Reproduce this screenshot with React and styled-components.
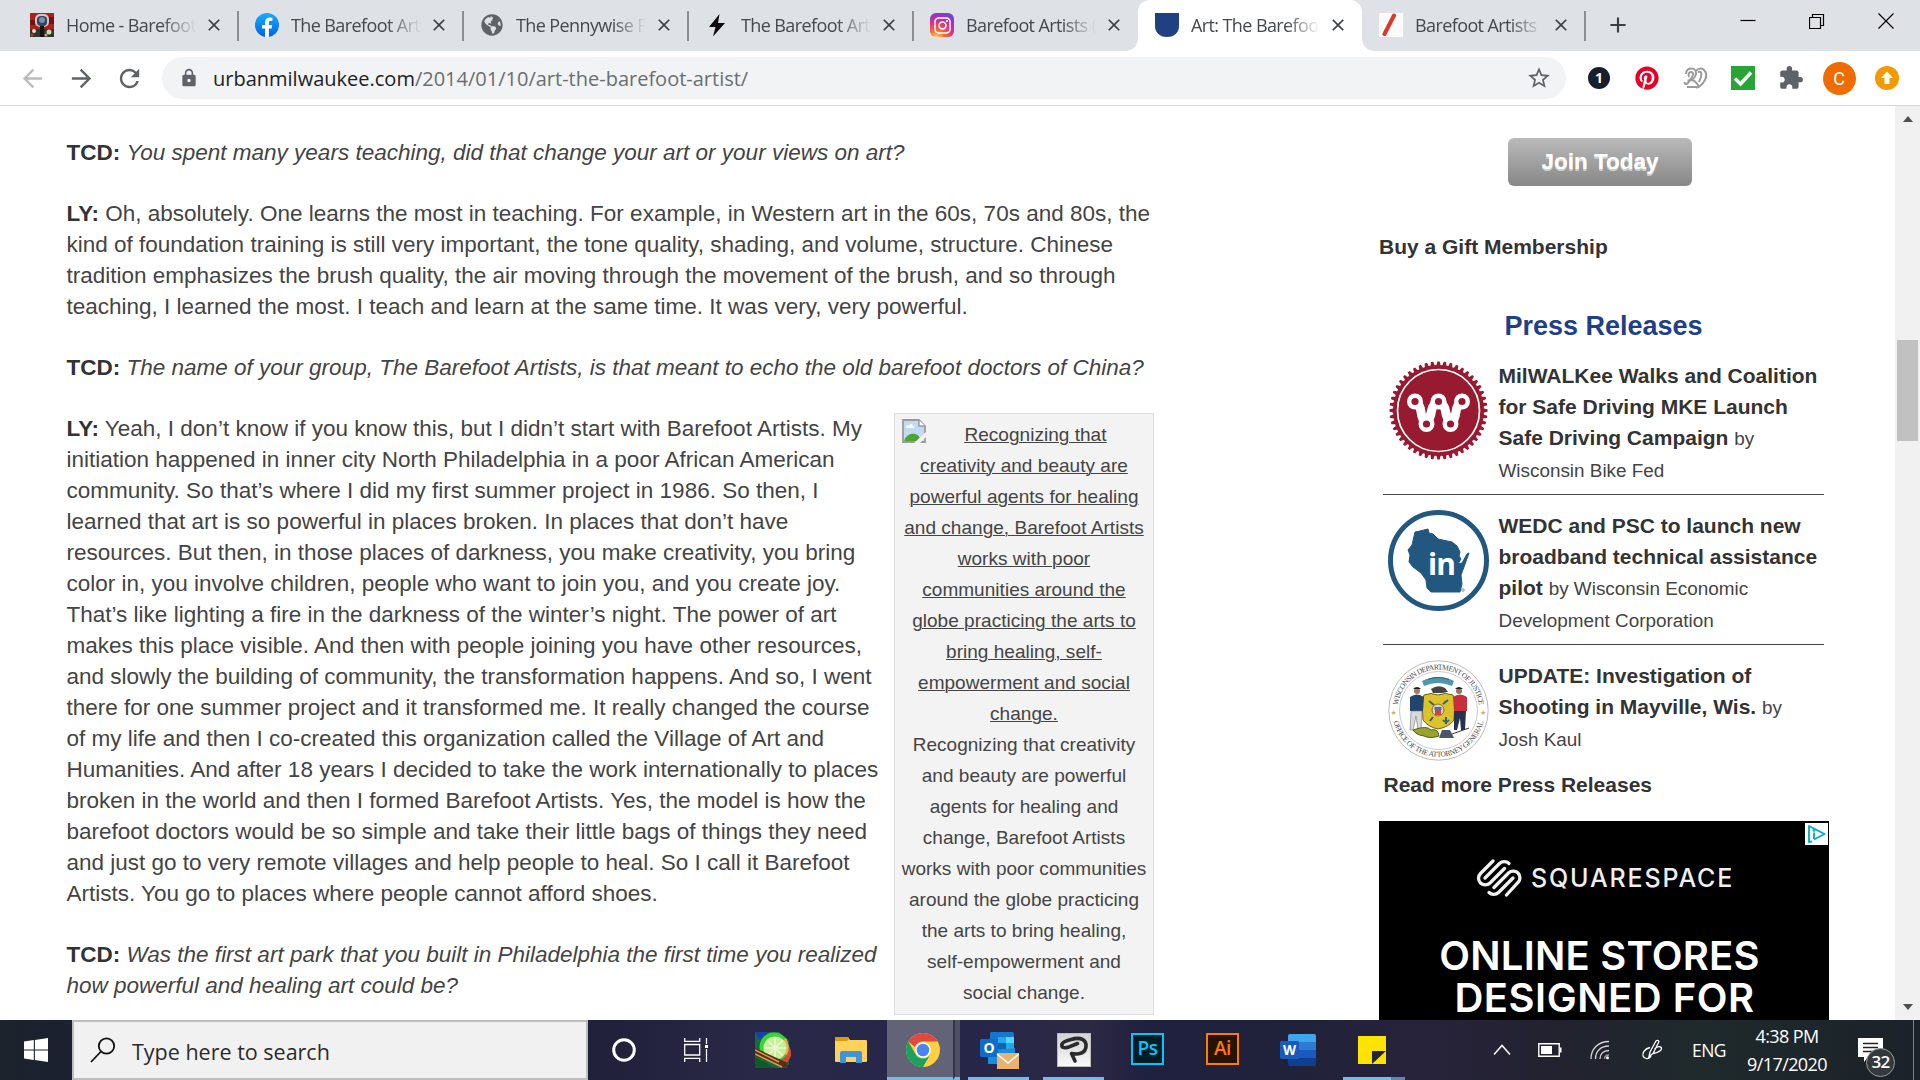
import React from "react";
import styled, { createGlobalStyle } from "styled-components";
import { MdArrowBack, MdArrowForward, MdRefresh, MdLock, MdStarBorder, MdExtension, MdClose, MdAdd } from "react-icons/md";
import { FaGlobeAmericas, FaInstagram, FaPinterest } from "react-icons/fa";

const Global = createGlobalStyle`
  * { box-sizing: border-box; }
  body { margin: 0; background: #fff; overflow: hidden; }
  svg { display: block; flex: none; }
`;

const UI = `"Open Sans", "Noto Sans", sans-serif`;
const PAGE = `"Liberation Sans", Arial, sans-serif`;

const Screen = styled.div`
  width: 1920px; height: 1080px; display: flex; flex-direction: column;
  overflow: hidden; background: #fff; font-family: ${PAGE};
`;

/* ---------- tab strip ---------- */
const TabStrip = styled.div`
  height: 51px; flex: none; display: flex; align-items: stretch;
  background: #dee1e6; padding-left: 13px;
`;
const Tab = styled.div`
  width: ${(p) => p.$w || 225}px; display: flex; align-items: center; flex: none;
  padding: 0 14px 1px 17px; position: relative;
  background: ${(p) => (p.$active ? "#fff" : "transparent")};
  border-radius: 12px 12px 0 0;
  ${(p) => p.$active && `
    &::before, &::after { content: ""; position: absolute; bottom: 0; width: 12px; height: 12px; }
    &::before { left: -12px; background: radial-gradient(circle at 0 0, transparent 11.5px, #fff 12px); }
    &::after { right: -12px; background: radial-gradient(circle at 100% 0, transparent 11.5px, #fff 12px); }
  `}
`;
const TabTitle = styled.span`
  flex: 1; min-width: 0; margin: 0 6px 0 12px; overflow: hidden; white-space: nowrap;
  font: 18px/24px ${UI}; letter-spacing: -0.6px; color: #45484c;
  mask-image: linear-gradient(to right, #000 calc(100% - 36px), transparent calc(100% - 2px));
`;
const TabClose = styled.span`
  width: 20px; display: flex; justify-content: center; color: #3c4043;
`;
const TabRule = styled.span`
  width: 2px; height: 30px; background: #8b8f94; margin: 11px -1px 0; flex: none;
`;
const NewTab = styled.span`
  width: 64px; padding: 0 0 1px 2px; display: flex; align-items: center; justify-content: center; color: #3c4043;
`;
const WindowButtons = styled.div`
  margin-left: auto; display: flex; height: 42px;
`;
const WindowButton = styled.span`
  width: 69px; display: flex; align-items: center; justify-content: center;
`;

/* ---------- toolbar ---------- */
const Toolbar = styled.div`
  height: 55px; flex: none; display: flex; align-items: center; background: #fff;
  border-bottom: 1px solid #d5d7da; padding: 0 0 0 18px;
`;
const NavButtons = styled.div`
  display: flex; gap: 19.5px; color: #5f6368; width: 144px; flex: none;
`;
const AddressBar = styled.div`
  width: 1404px; height: 42px; border-radius: 21px; background: #f1f3f4; flex: none;
  display: flex; align-items: center; padding: 0 14px 0 17px; color: #5f6368;
`;
const Url = styled.span`
  flex: 1; margin-left: 14px; padding-top: 1px; white-space: nowrap; font: 20px/28px ${UI}; letter-spacing: 0; color: #6a6e73;
  b { font-weight: 400; color: #202124; }
`;
const Extensions = styled.div`
  flex: none; display: flex; align-items: center; padding-left: 9px;
`;
const Slot = styled.span`
  width: 48px; flex: none; display: flex; justify-content: center; align-items: center; color: ${(p) => p.$c || "#5f6368"};
`;
const Avatar = styled.span`
  width: 33px; height: 33px; border-radius: 50%; background: #ef6c00; color: #fff; text-align: center;
  font: 18px/33px Roboto, sans-serif; flex: none;
`;
const DarkDot = styled.span`
  width: 22px; height: 22px; border-radius: 50%; background: #1a1d2b; color: #fff; text-align: center;
  font: 700 14px/22px ${UI};
`;

/* ---------- page ---------- */
const Page = styled.div`
  height: 914px; flex: none; display: flex; overflow: hidden; background: #fff;
`;
const Article = styled.main`
  width: 1154px; padding: 31px 0 0 66.5px; color: #444;
  font-size: 22.5px; line-height: 31px;
`;
const Para = styled.p`
  margin: 0 0 30px; white-space: nowrap;
  b { color: #333; }
`;
const Caption = styled.figure`
  float: right; width: 260px; height: 602px; margin: 0; padding: 5px 6px 0; text-align: center;
  background: #f3f3f3; border: 1px solid #ddd; font-size: 19px; white-space: nowrap; letter-spacing: 0.03px;
`;
const CaptionLink = styled.div`
  text-decoration: underline;
  text-decoration-thickness: 1px;
`;
const FirstLine = styled.div`
  display: flex;
  svg { margin-left: 1px; }
  span { flex: 1; margin-left: -2px; text-decoration: underline; text-decoration-thickness: 1px; }
`;

const Sidebar = styled.aside`
  width: 450px; margin-left: 225px; padding-top: 32px; display: flex; flex-direction: column; flex: none;
`;
const JoinButton = styled.button`
  align-self: center; margin-right: 8px; width: 184px; height: 48px; border: 0; padding: 0 0 1px; flex: none;
  border-radius: 6px; background: linear-gradient(#bababa, #878787); color: #fff;
  font: 700 22.5px ${PAGE}; text-shadow: 0 1.5px 0 rgba(255,255,255,.55);
`;
const Gift = styled.div`
  margin-top: 45px; font-weight: 700; font-size: 21px; line-height: 31px; color: #333;
`;
const PressTitle = styled.h2`
  margin: 46px 0 17px -1px; text-align: center; font-size: 27px; line-height: 36px; color: #1f3f87;
`;
const Release = styled.div`
  margin: 0 5px 0 4px; height: ${(p) => (p.$last ? 110 : 134)}px; flex: none;
  margin-bottom: ${(p) => (p.$last ? 0 : 16)}px;
  border-bottom: ${(p) => (p.$last ? "0" : "1px solid #444")};
  display: flex; gap: 9.5px; padding-left: 5px;
  font-size: 21px; line-height: 31px; color: #444; white-space: nowrap;
  b { color: #333; }
  & > svg { margin-top: -1px; }
`;
const ReleaseText = styled.div` margin-top: -1px; `;
const By = styled.span` font-size: 18.9px; line-height: 1; `;
const Author = styled.div` margin-top: 2px; font-size: 18.9px; `;
const ReadMore = styled.div`
  margin: -2px 0 21px 4.5px; font-size: 21px; line-height: 31px; font-weight: 700; color: #333;
`;
const Ad = styled.div`
  height: 240px; flex: none; background: #000; color: #fff; position: relative; text-align: center;
  font-family: Inter, sans-serif; padding-top: 37px;
`;
const AdBadge = styled.span`
  position: absolute; top: 2px; right: 1px; width: 23px; height: 22px; background: #fff;
`;
const AdLogo = styled.div`
  display: flex; align-items: center; height: 40px; padding-left: 97px; gap: 9px;
  font-size: 25px; font-weight: 500; letter-spacing: 1.85px; color: #eee;
`;
const AdHead = styled.div`
  margin: 37px 0 0 -9px; font-size: 40px; line-height: 42px; font-weight: 600; letter-spacing: 0.2px; color: #fff;
  div + div { padding-left: 10px; letter-spacing: 0.5px; }
`;

const Scrollbar = styled.div`
  width: 25px; margin-left: auto; background: #f1f1f1; display: flex; flex-direction: column; align-items: center;
  padding: 10px 0;
`;
const Thumb = styled.div`
  width: 21px; height: 101px; margin: 218px 0 auto; background: #c1c1c1;
`;
const Arrow = styled.span`
  width: 0; height: 0; border: 5.5px solid transparent; flex: none;
  ${(p) => (p.$up ? "border-top: 0; border-bottom: 6px solid #505050;" : "border-bottom: 0; border-top: 6px solid #505050;")}
`;

/* ---------- taskbar ---------- */
const Taskbar = styled.div`
  height: 60px; flex: none; display: flex; color: #fff;
  background: linear-gradient(90deg, #1b232c 0, #1c2030 72px, #21203a 590px, #292847 760px, #26264a 960px, #2c2944 1085px, #1f2140 1150px, #20213a 1280px, #27233a 1430px, #22222f 1560px, #1f2a2c 1700px, #1b2229 1920px);
`;
const Start = styled.div`
  width: 72px; display: flex; align-items: center; justify-content: center;
`;
const SearchBox = styled.div`
  width: 516px; border: 2px solid #bebebe; background: #f1f1f1; display: flex; align-items: center;
  padding: 0 0 1px 16px; gap: 16px; color: #2b2b2b; font: 21.5px/28px ${UI};
  span { letter-spacing: 0; padding-top: 5px; }
`;
const AppButton = styled.div`
  width: ${(p) => p.$w || 75}px; display: flex; align-items: center; justify-content: center; flex: none;
  background: ${(p) => (p.$active ? "#636378" : "transparent")};
  padding-left: ${(p) => p.$shift || 0}px;
  position: relative;
  ${(p) => p.$bar && `&::after { content: ""; position: absolute; bottom: 0; height: 3px; left: ${p.$bar[0]}px; width: ${p.$bar[1]}px; background: #76b9ed; }`}
`;
const StackEdge = styled.div`
  width: 7px; background: #505065; border-left: 2px solid #35354a; border-bottom: 3px solid #76b9ed; flex: none;
`;
const DimBar = styled.div`
  width: 14px; height: 3px; align-self: flex-end; background: #568bb5; flex: none;
`;
const Tile = styled.span`
  width: 33px; height: 32px; border: 2px solid ${(p) => p.$c}; background: ${(p) => p.$bg}; color: ${(p) => p.$c};
  font: 600 19px/27px "Open Sans", sans-serif; text-align: center; letter-spacing: -0.5px; margin: 0 1px 3px 0;
`;
const Tray = styled.div`
  margin-left: auto; display: flex; align-items: center; height: 60px; padding-right: 6px;
`;
const TrayItem = styled.span`
  width: ${(p) => p.$w}px; display: flex; justify-content: center; flex: none;
  font: 17.5px/24px ${UI}; letter-spacing: -0.6px;
`;
const Clock = styled.div`
  width: 100px; text-align: center; font: 18px/28px ${UI}; letter-spacing: -0.6px;
`;
const Notice = styled.div`
  width: 56px; margin-left: 20px; position: relative; height: 60px; padding: 18px 0 0 1px;
`;
const Badge = styled.span`
  position: absolute; left: 9px; top: 28px; width: 29px; height: 29px; border-radius: 50%;
  border: 1.5px solid #9a9da0; background: #35393c; color: #fff; text-align: center;
  font: 600 17px/25px ${UI}; letter-spacing: -0.8px;
`;
const DeskEdge = styled.span` width: 1px; height: 60px; background: #7b8084; `;

/* ---------- drawings ---------- */
const HomeFav = () => (
  <svg width="24" height="24" viewBox="0 0 24 24">
    <rect width="24" height="24" fill="#a8231d" /><path d="M0 7h5v5H0zM18 4h6v7h-6z" fill="#6e1512" />
    <rect y="16" width="24" height="8" fill="#2e3a26" />
    <rect x="5" y="1" width="14" height="13" rx="5" fill="#d9c3c6" /><rect x="7" y="3" width="10" height="10" rx="4" fill="#30445f" />
    <circle cx="12" cy="7" r="3" fill="#7195ab" /><path d="M10 13h4v11h-4z" fill="#121510" />
    <circle cx="4" cy="18" r="2" fill="#e2ddd0" /><circle cx="19" cy="19" r="2.5" fill="#d8cdb9" /><circle cx="2" cy="22" r="1.5" fill="#c33" /><circle cx="16" cy="22" r="1.5" fill="#c99" />
  </svg>
);
const Facebook = () => (
  <svg width="24" height="24" viewBox="0 0 24 24">
    <defs><linearGradient id="fb" x2="0" y2="1"><stop stopColor="#18acfe" /><stop offset="1" stopColor="#0163e0" /></linearGradient></defs>
    <circle cx="12" cy="12" r="12" fill="url(#fb)" />
    <path d="M16.6 15.4l.6-3.4h-3.3V9.6c0-1 .5-1.900 2-1.900h1.500V4.800s-1.400-.3-2.700-.3c-2.800 0-4.600 1.700-4.600 4.700V12H7v3.400h3.100V24h3.800v-8.600z" fill="#fff" />
  </svg>
);
const Bolt = () => (
  <svg width="24" height="24" viewBox="0 0 24 24"><path d="M14.500 1L4 14h6.500L8 23.500 20 10h-7z" fill="#0b0b0b" /></svg>
);
const InstaBox = styled.span`
  width: 24px; height: 24px; border-radius: 6px; display: flex; align-items: center; justify-content: center; color: #fff; flex: none;
  background: radial-gradient(circle at 28% 105%, #fed576 0, #f47133 26%, #e2307a 52%, #a033b8 72%, #5b4fe0 100%);
`;
const GlobeFav = styled(FaGlobeAmericas)` margin: 1px; color: #5f6368; `;
const Shield = () => (
  <svg width="24" height="24" viewBox="0 0 24 24"><path d="M0 0h24v13c0 6-4 11-12 11S0 19 0 13z" fill="#1f4083" /></svg>
);
const RedStroke = () => (
  <svg width="24" height="24" viewBox="0 0 24 24"><rect width="24" height="24" fill="#fdfbf9" /><path d="M15 2.500L5.500 21" stroke="#d8392b" strokeWidth="4" strokeLinecap="round" /></svg>
);
const Knot = () => (
  <svg width="25" height="25" viewBox="0 0 25 25" fill="none" stroke="#9b9b9b" strokeWidth="2">
    <path d="M3 8c0-4 3-6 6-5.500 3.500.5 5 3.500 3.500 7-1 3-5 5.500-8 5" /><path d="M6 11c-1-3 0-5 2-5s3 2 1 5l-4 6c-2 2-4 1-3-1" />
    <path d="M8 14c3 0 5 2 7 5 1 2 0 3-2 2L4 21" /><path d="M13 5c2-3 6-3 8-1 4 4 2 9-1 13l-4 4" /><path d="M15 6c3-1 4 1 3 5l-2 5" />
  </svg>
);
const Check = () => (
  <svg width="24" height="24" viewBox="0 0 24 24"><rect width="24" height="24" fill="#28a536" /><path d="M4 12.500l5.500 5.500L20 6.500" fill="none" stroke="#fff" strokeWidth="3.500" /></svg>
);
const UpDot = () => (
  <svg width="24" height="24" viewBox="0 0 24 24"><circle cx="12" cy="12" r="12" fill="#f39a00" /><path d="M12 5.500l6 6.500h-3.500v6h-5v-6H6z" fill="#fff" /></svg>
);
const BrokenImage = () => (
  <svg width="24" height="24" viewBox="0 0 24 24">
    <path d="M1 1h16l6 6v16H1z" fill="#c4d9f3" stroke="#9b9b9b" strokeWidth="1.800" /><path d="M17 1v6h6" fill="#fff" stroke="#9b9b9b" strokeWidth="1.400" />
    <path d="M4 8.500c0-2 2-2.500 3-2 1-2 4-1.500 4 .5 2 0 2 2 .5 2H5z" fill="#fff" /><path d="M2 22c2-6 7-8 11-7 3 .8 5 3 6 7z" fill="#4ba52f" /><path d="M12 24l12-11v5l-6 6z" fill="#f3f3f3" />
  </svg>
);
const teeth = Array.from({ length: 48 }, (_, i) => i * 7.5);
const GearW = () => (
  <svg width="101" height="101" viewBox="0 0 101 101">
    {teeth.map((a) => <path key={a} d="M48.300 6l1-4.500h2.400l1 4.500z" fill="#981a31" transform={`rotate(${a} 50.500 50.500)`} />)}
    <circle cx="50.500" cy="50.500" r="45.500" fill="#981a31" /><circle cx="50.500" cy="50.500" r="41" fill="none" stroke="#fff" strokeWidth="1.700" />
    <g stroke="#fff" strokeWidth="9" fill="none" strokeLinecap="round" strokeLinejoin="round">
      <path d="M27 42q5 2 6 10t5 11M50.500 42q-6 2-7 9t-5 12M50.500 42q6 2 7 9t5 12M74 42q-5 2-6 10t-5 11" />
    </g>
    {[[27, 41.500], [50.500, 41.500], [74, 41.500], [38.500, 64], [62.500, 64]].map(([x, y]) => (
      <g key={x}><circle cx={x} cy={y} r="8" fill="#fff" /><circle cx={x} cy={y} r="3.600" fill="#981a31" /></g>
    ))}
  </svg>
);
const WiscIn = () => (
  <svg width="101" height="101" viewBox="0 0 101 101">
    <circle cx="50.500" cy="50.500" r="48" fill="#fff" stroke="#22587f" strokeWidth="5" />
    <path d="M27 22l5-1 8-2 1 4 4 1 5 5 14 3 5 4 3 6-1 4 2 3-3 5 4-1 5-9 2-1-5 14-3 8 1 9-2 8H43l-4-4-1-8-5-7-8-6-4-5 1-7-2-5 4-5z" fill="#22587f" stroke="#22587f" />
    <text x="40" y="65" fontFamily="Open Sans, sans-serif" fontWeight="700" fontSize="30" letterSpacing="-1" fill="#fff">in</text>
    <circle cx="75" cy="80" r="1.300" fill="none" stroke="#22587f" strokeWidth=".6" />
  </svg>
);
const Seal = () => (
  <svg width="101" height="101" viewBox="0 0 101 101">
    <circle cx="50.500" cy="50.500" r="49.700" fill="#fff" stroke="#bbb" strokeWidth="1" />
    <circle cx="50.500" cy="50.500" r="39" fill="#fff" stroke="#bdbdbd" strokeWidth=".8" />
    <defs><path id="arcTop" d="M9.500 50.500a41 41 0 0 1 82 0" /><path id="arcBot" d="M4.200 50.500a46.300 46.300 0 0 0 92.600 0" /></defs>
    <g fontFamily="Liberation Serif, serif" fontSize="7.600" fill="#4a4a4a" textAnchor="middle">
      <text><textPath href="#arcTop" startOffset="50%" textLength="118">WISCONSIN DEPARTMENT OF JUSTICE</textPath></text>
      <text><textPath href="#arcBot" startOffset="50%" textLength="123">OFFICE OF THE ATTORNEY GENERAL</textPath></text>
    </g>
    <text x="2.500" y="55" fontSize="7" fill="#c9b45a" fontFamily="DejaVu Sans">★</text><text x="92" y="55" fontSize="7" fill="#c9b45a" fontFamily="DejaVu Sans">★</text>
    <path d="M34 21q16-8 32 0l-2 5q-14-6-28 0z" fill="#4f97ad" /><path d="M40 19.500q10-4 21 0" stroke="#2b6277" fill="none" />
    <path d="M43 29q7-5 14-1l3 4-6 1H45z" fill="#444" />
    <path d="M36 35q7-3 14 0 7-3 15 0l2 6-1 19q-5 7-16 9-10-2-15-9l-1-19z" fill="#dcc32a" stroke="#6d6316" />
    <circle cx="50" cy="50" r="6" fill="#d8d3d6" stroke="#857522" /><path d="M47 50h6v5h-6z" fill="#c44" /><path d="M46.500 47h7v3h-7z" fill="#456fa5" />
    <path d="M41 41l5 4M55 44l5-4M42 61l3-4M58 57v7M55 60q3 4 6 0" stroke="#385e83" strokeWidth="2" fill="none" />
    <circle cx="29" cy="31" r="3" fill="#a57a5f" /><path d="M25 29q4-4 8 0z" fill="#222" /><path d="M22 37q7-5 14 0l-1 14H22z" fill="#21456c" /><path d="M23 51h11l-1 19h-3l-2-14-3 14h-3z" fill="#d7dad8" stroke="#777" strokeWidth=".6" />
    <circle cx="71" cy="31" r="3" fill="#9c7257" /><path d="M67 29q4-4 8 0z" fill="#222" /><path d="M65 37q7-5 14 0v14H66z" fill="#c6303a" /><path d="M66 51h12l-1 19h-4l-1-12-3 12h-3z" fill="#27324d" />
    <path d="M25 70q14-5 18 0 7-2 8 6-9 3-15 0-8-1-11-6z" fill="#99a32e" stroke="#4f601b" /><path d="M54 70h8l4 8H51z" fill="#4e5567" /><path d="M64 74l17-6" stroke="#333" />
  </svg>
);
const SquareMark = () => (
  <svg width="46" height="38" viewBox="0 0 46 38" fill="none" stroke="#f1f1f1" strokeWidth="3.300" strokeLinecap="round">
    <path d="M17 2L4.500 14.500a6.700 6.700 0 0 0 9.500 9.500L28.500 9.500" />
    <path d="M9 19L23.500 4.500a6.700 6.700 0 0 1 9.500 0" />
    <path d="M37 19L22.500 33.500a6.700 6.700 0 0 1-9.500 0" />
    <path d="M30.500 36L42 23.500a6.700 6.700 0 0 0-9.500-9.500L18 28.500" />
  </svg>
);
const Windows = () => (
  <svg width="24" height="24" viewBox="0 0 24 24" fill="#fff"><path d="M0 3.400l9.800-1.300v9.300H0zM10.900 1.900L24 0v11.400H10.900zM0 12.500h9.800v9.400L0 20.600zM10.900 12.500H24V24l-13.100-1.900z" /></svg>
);
const Search = () => (
  <svg width="26" height="26" viewBox="0 0 26 26" fill="none" stroke="#111" strokeWidth="1.800"><circle cx="16.500" cy="9" r="7.700" /><path d="M11 14.500L1 25" /></svg>
);
const TaskView = () => (
  <svg width="24" height="24" viewBox="0 0 24 24" fill="none" stroke="#fff" strokeWidth="1.300">
    <path d="M.7 0v3.300h15V0M.7 6.500h15v10.500H.7zM.7 24v-3.700h15V24M22.500 0v6M22.500 11v13" /><path d="M21 7h3v3h-3z" fill="#fff" stroke="none" />
  </svg>
);
const Lime = () => (
  <svg width="37" height="36" viewBox="0 0 37 36">
    <path d="M0 0h24l10 8v24l-3 4H0z" fill="#156b3a" /><path d="M0 0h14L4 8z" fill="#173fae" /><path d="M24 6q13 5 12 18l-5 9-9-7z" fill="#cf4b37" />
    <circle cx="19" cy="15" r="14.500" fill="#38d43c" /><path d="M20 16L31 6q5 9 1 17z" fill="#f0a64c" /><circle cx="20" cy="16" r="11.500" fill="#c9ee9a" />
    {[0, 45, 90, 135].map((a) => <path key={a} d="M20 5v22" stroke="#edfbd4" strokeWidth="1.500" transform={`rotate(${a} 20 16)`} />)}
    <path d="M0 16l33 15-2 5L0 24z" fill="#5a2d14" /><path d="M0 18l24 12M0 22l27 13" stroke="#d99a55" strokeWidth="1.500" /><path d="M0 25l20 11H0z" fill="#0e5a2a" />
  </svg>
);
const Folder = () => (
  <svg width="32" height="26" viewBox="0 0 32 26"><path d="M0 1q0-1 1-1h12l2 3h16q1 0 1 1v20q0 1-1 1H1q-1 0-1-1z" fill="#fdd25a" /><path d="M0 1q0-1 1-1h12l1 2-2 2H0z" fill="#dc9a08" /><path d="M5 26V16q0-2 2-2h18q2 0 2 2v10h-6v-6H11v6z" fill="#3f94dc" /></svg>
);
const Chrome = () => (
  <svg width="34" height="34" viewBox="0 0 34 34">
    <circle cx="17" cy="17" r="17" fill="#fdd040" />
    <path d="M2.300 8.500A17 17 0 0 1 31.700 8.500H17a8.500 8.500 0 0 0-8 5.500z" fill="#e04a3f" />
    <path d="M2.300 8.500A17 17 0 0 0 17 34l7.400-12.700a8.500 8.500 0 0 1-14.800 0z" fill="#1aa15f" />
    <circle cx="17" cy="17" r="7.800" fill="#fff" /><circle cx="17" cy="17" r="6.300" fill="#4a86f0" />
  </svg>
);
const Outlook = () => (
  <svg width="39" height="37" viewBox="0 0 39 37">
    <rect x="10" width="24" height="26" rx="1.500" fill="#1378cf" /><path d="M18 5h8v6h-8z" fill="#28a8ea" /><path d="M26 5h8v6h-8z" fill="#50d9ff" /><path d="M18 11h8v6h-8z" fill="#0f64b8" /><path d="M26 11h8v6h-8z" fill="#28a8ea" />
    <path d="M8 19l27-3v16H8z" fill="#1b8edb" /><rect y="7" width="18" height="18" rx="1.500" fill="#0f6cc7" />
    <text x="9" y="21" textAnchor="middle" fontFamily="Open Sans" fontWeight="700" fontSize="14" fill="#fff">O</text>
    <path d="M17 21h22v16H17z" fill="#eab26f" /><path d="M17 22l11 9 11-9" fill="none" stroke="#fff" strokeWidth="1.600" />
  </svg>
);
const ClipStudio = () => (
  <svg width="34" height="34" viewBox="0 0 34 34">
    <defs><linearGradient id="csp" x2="0" y2="1"><stop stopColor="#d2d2d2" /><stop offset="1" stopColor="#fafafa" /></linearGradient></defs>
    <rect x=".5" y=".5" width="33" height="33" fill="url(#csp)" stroke="#bbb" />
    <path d="M20.500 10.500L11 14.300Q4.500 16 4.800 11.500Q5.500 8.500 14 6.500C24 3.500 29.500 7 29 13.500C28.500 20 22 22 14.500 20.500L18 28" fill="none" stroke="#2b2b2b" strokeWidth="3.600" strokeLinecap="round" strokeLinejoin="round" />
  </svg>
);
const Word = () => (
  <svg width="36" height="32" viewBox="0 0 36 32"><rect x="8" width="28" height="32" rx="2" fill="#103f91" /><path d="M10 0h24q2 0 2 2v6H8V2q0-2 2-2z" fill="#41a5ee" /><path d="M8 8h28v8H8z" fill="#2b7cd3" /><path d="M8 16h28v8H8z" fill="#185abd" />
    <rect y="7" width="19" height="18" rx="1.500" fill="#185abd" /><text x="9.500" y="21" textAnchor="middle" fontFamily="Open Sans" fontWeight="700" fontSize="13.500" fill="#fff">W</text></svg>
);
const Sticky = () => (
  <svg width="28" height="28" viewBox="0 0 28 28"><path d="M0 0h28v28H0z" fill="#fde300" /><path d="M14 28V15h14z" fill="#26233a" /><path d="M18 28l10-13v13z" fill="#fde300" /></svg>
);
const Battery = () => (
  <svg width="24" height="14" viewBox="0 0 24 14"><path d="M.8.8h20.400v12.400H.8z" fill="none" stroke="#fff" strokeWidth="1.400" /><path d="M3 3h11v8H3zM22 4.500h1.500v5H22z" fill="#fff" /></svg>
);
const Wifi = () => (
  <svg width="20" height="20" viewBox="0 0 20 20" fill="none" stroke="#d5d7d8" strokeWidth="1.300"><path d="M1 19C1 9 8 1.500 19 1.500M5.500 19C5.500 11 11 6 19 6M10 19c0-5 3-8.500 9-8.500" /><path d="M14.500 19c0-2 1.500-4 4.500-4" stroke="#999" /><circle cx="17.500" cy="17.800" r="1.500" fill="#fff" stroke="none" /></svg>
);
const Pen = () => (
  <svg width="22" height="22" viewBox="0 0 22 22" fill="none" stroke="#fff" strokeWidth="1.300"><path d="M9 13l6-11q2-1.500 3 .5l-6 12-4 3zM9 8.500C4 9.500 1 14 2 17s6 4 8 0M13.500 10c3-3 7-3 7-.5s-4 4-8 5" /></svg>
);

const tabs = [
  { icon: <HomeFav />, title: "Home - Barefoot Artists" },
  { icon: <Facebook />, title: "The Barefoot Artist" },
  { icon: <GlobeFav size={22} />, title: "The Pennywise Foundation" },
  { icon: <Bolt />, title: "The Barefoot Artist" },
  { icon: <InstaBox><FaInstagram size={19} /></InstaBox>, title: "Barefoot Artists (@bare" },
  { icon: <Shield />, title: "Art: The Barefoot Artist", active: true, w: 224 },
  { icon: <RedStroke />, title: "Barefoot Artists", w: 223 },
];

const answer = [
  "initiation happened in inner city North Philadelphia in a poor African American",
  "community. So that’s where I did my first summer project in 1986. So then, I",
  "learned that art is so powerful in places broken. In places that don’t have",
  "resources. But then, in those places of darkness, you make creativity, you bring",
  "color in, you involve children, people who want to join you, and you create joy.",
  "That’s like lighting a fire in the darkness of the winter’s night. The power of art",
  "makes this place visible. And then with people joining you have other resources,",
  "and slowly the building of community, the transformation happens. And so, I went",
  "there for one summer project and it transformed me. It really changed the course",
  "of my life and then I co-created this organization called the Village of Art and",
  "Humanities. And after 18 years I decided to take the work internationally to places",
  "broken in the world and then I formed Barefoot Artists. Yes, the model is how the",
  "barefoot doctors would be so simple and take their little bags of things they need",
  "and just go to very remote villages and help people to heal. So I call it Barefoot",
  "Artists. You go to places where people cannot afford shoes.",
];
const linkLines = ["creativity and beauty are", "powerful agents for healing", "and change, Barefoot Artists", "works with poor", "communities around the", "globe practicing the arts to", "bring healing, self-", "empowerment and social", "change."];
const captionLines = ["Recognizing that creativity", "and beauty are powerful", "agents for healing and", "change, Barefoot Artists", "works with poor communities", "around the globe practicing", "the arts to bring healing,", "self-empowerment and", "social change."];

export default function App() {
  return (
    <Screen>
      <Global />
      <TabStrip>
        {tabs.map((t, i) => (
          <React.Fragment key={i}>
            <Tab $active={t.active} $w={t.w}>
              {t.icon}<TabTitle>{t.title}</TabTitle><TabClose><MdClose size={20} /></TabClose>
            </Tab>
            {i !== 4 && i !== 5 && <TabRule />}
          </React.Fragment>
        ))}
        <NewTab><MdAdd size={26} /></NewTab>
        <WindowButtons>
          <WindowButton><svg width="16" height="18" viewBox="0 0 16 18"><path d="M.5 8.500h15" stroke="#000" strokeWidth="1.200" /></svg></WindowButton>
          <WindowButton><svg width="16" height="18" viewBox="0 0 16 18" fill="none" stroke="#000" strokeWidth="1.200"><path d="M.5 5.500h11v11H.5zM3.500 5.500V2.500h11v11h-3" /></svg></WindowButton>
          <WindowButton><svg width="16" height="18" viewBox="0 0 16 18"><path d="M.5 1.500l15 15M15.500 1.500l-15 15" stroke="#000" strokeWidth="1.200" /></svg></WindowButton>
        </WindowButtons>
      </TabStrip>

      <Toolbar>
        <NavButtons>
          <MdArrowBack size={29} color="#babcbe" /><MdArrowForward size={29} /><MdRefresh size={29} />
        </NavButtons>
        <AddressBar>
          <MdLock size={20} />
          <Url><b>urbanmilwaukee.com</b>/2014/01/10/art-the-barefoot-artist/</Url>
          <MdStarBorder size={26} />
        </AddressBar>
        <Extensions>
          <Slot><DarkDot>1</DarkDot></Slot>
          <Slot $c="#e60023"><FaPinterest size={24} /></Slot>
          <Slot><Knot /></Slot>
          <Slot><Check /></Slot>
          <Slot><MdExtension size={26} /></Slot>
          <Slot><Avatar>C</Avatar></Slot>
          <Slot><UpDot /></Slot>
        </Extensions>
      </Toolbar>

      <Page>
        <Article>
          <Para><b>TCD:</b> <i>You spent many years teaching, did that change your art or your views on art?</i></Para>
          <Para>
            <b>LY:</b> Oh, absolutely. One learns the most in teaching. For example, in Western art in the 60s, 70s and 80s, the<br />
            kind of foundation training is still very important, the tone quality, shading, and volume, structure. Chinese<br />
            tradition emphasizes the brush quality, the air moving through the movement of the brush, and so through<br />
            teaching, I learned the most. I teach and learn at the same time. It was very, very powerful.
          </Para>
          <Para><b>TCD:</b> <i>The name of your group, The Barefoot Artists, is that meant to echo the old barefoot doctors of China?</i></Para>
          <Caption>
            <CaptionLink>
              <FirstLine><BrokenImage /><span>Recognizing that</span></FirstLine>
              {linkLines.map((l) => <div key={l}>{l}</div>)}
            </CaptionLink>
            {captionLines.map((l) => <div key={l}>{l}</div>)}
          </Caption>
          <Para>
            <b>LY:</b> Yeah, I don’t know if you know this, but I didn’t start with Barefoot Artists. My
            {answer.map((l) => <React.Fragment key={l}><br />{l}</React.Fragment>)}
          </Para>
          <Para><b>TCD:</b> <i>Was the first art park that you built in Philadelphia the first time you realized<br />how powerful and healing art could be?</i></Para>
        </Article>

        <Sidebar>
          <JoinButton>Join Today</JoinButton>
          <Gift>Buy a Gift Membership</Gift>
          <PressTitle>Press Releases</PressTitle>
          <Release>
            <GearW />
            <ReleaseText><b>MilWALKee Walks and Coalition<br />for Safe Driving MKE Launch<br />Safe Driving Campaign</b> <By>by</By><Author>Wisconsin Bike Fed</Author></ReleaseText>
          </Release>
          <Release>
            <WiscIn />
            <ReleaseText><b>WEDC and PSC to launch new<br />broadband technical assistance<br />pilot</b> <By>by Wisconsin Economic</By><Author>Development Corporation</Author></ReleaseText>
          </Release>
          <Release $last>
            <Seal />
            <ReleaseText><b>UPDATE: Investigation of<br />Shooting in Mayville, Wis.</b> <By>by</By><Author>Josh Kaul</Author></ReleaseText>
          </Release>
          <ReadMore>Read more Press Releases</ReadMore>
          <Ad>
            <AdBadge>
              <svg width="23" height="22" viewBox="0 0 23 22" fill="none" stroke="#00aecd" strokeWidth="1.900"><path d="M7 18.500L4 19V3l15.500 8L9 16.500" strokeLinejoin="round" /><path d="M9 9.500v6.500" /><circle cx="9" cy="7.300" r=".6" /></svg>
            </AdBadge>
            <AdLogo><SquareMark />SQUARESPACE</AdLogo>
            <AdHead><div>ONLINE STORES</div><div>DESIGNED FOR</div></AdHead>
          </Ad>
        </Sidebar>

        <Scrollbar><Arrow $up /><Thumb /><Arrow /></Scrollbar>
      </Page>

      <Taskbar>
        <Start><Windows /></Start>
        <SearchBox><Search /><span>Type here to search</span></SearchBox>
        <AppButton $w={72}><svg width="24" height="24" viewBox="0 0 24 24"><circle cx="12" cy="12" r="10.300" fill="none" stroke="#fff" strokeWidth="3" /></svg></AppButton>
        <AppButton $w={72}><TaskView /></AppButton>
        <AppButton $w={82}><Lime /></AppButton>
        <AppButton $w={73}><Folder /></AppButton>
        <AppButton $w={66} $shift={6} $active $bar={[0, 66]}><Chrome /></AppButton>
        <StackEdge />
        <AppButton $w={78} $bar={[8, 61]}><Outlook /></AppButton>
        <AppButton $w={72} $bar={[5, 61]}><ClipStudio /></AppButton>
        <AppButton $w={76}><Tile $c="#00c8ff" $bg="#001d26">Ps</Tile></AppButton>
        <AppButton $w={74}><Tile $c="#ff7c00" $bg="#261300">Ai</Tile></AppButton>
        <AppButton $w={76}><Word /></AppButton>
        <AppButton $w={55} $shift={16} $bar={[7, 48]}><Sticky /></AppButton>
        <DimBar />
        <Tray>
          <TrayItem $w={44}><svg width="18" height="12" viewBox="0 0 18 12"><path d="M1 10.500L9 1.500l8 9" fill="none" stroke="#fff" strokeWidth="1.500" /></svg></TrayItem>
          <TrayItem $w={52}><Battery /></TrayItem>
          <TrayItem $w={47}><Wifi /></TrayItem>
          <TrayItem $w={58}><Pen /></TrayItem>
          <TrayItem $w={56}>ENG</TrayItem>
          <Clock>4:38 PM<br />9/17/2020</Clock>
          <Notice>
            <svg width="25" height="24" viewBox="0 0 25 24"><path d="M0 0h25v19H10l-4 5v-5H0z" fill="#fff" /><path d="M5 5.500h15M5 9.500h15M5 13.500h10" stroke="#222" strokeWidth="1.400" /></svg>
            <Badge>32</Badge>
          </Notice>
          <DeskEdge />
        </Tray>
      </Taskbar>
    </Screen>
  );
}
